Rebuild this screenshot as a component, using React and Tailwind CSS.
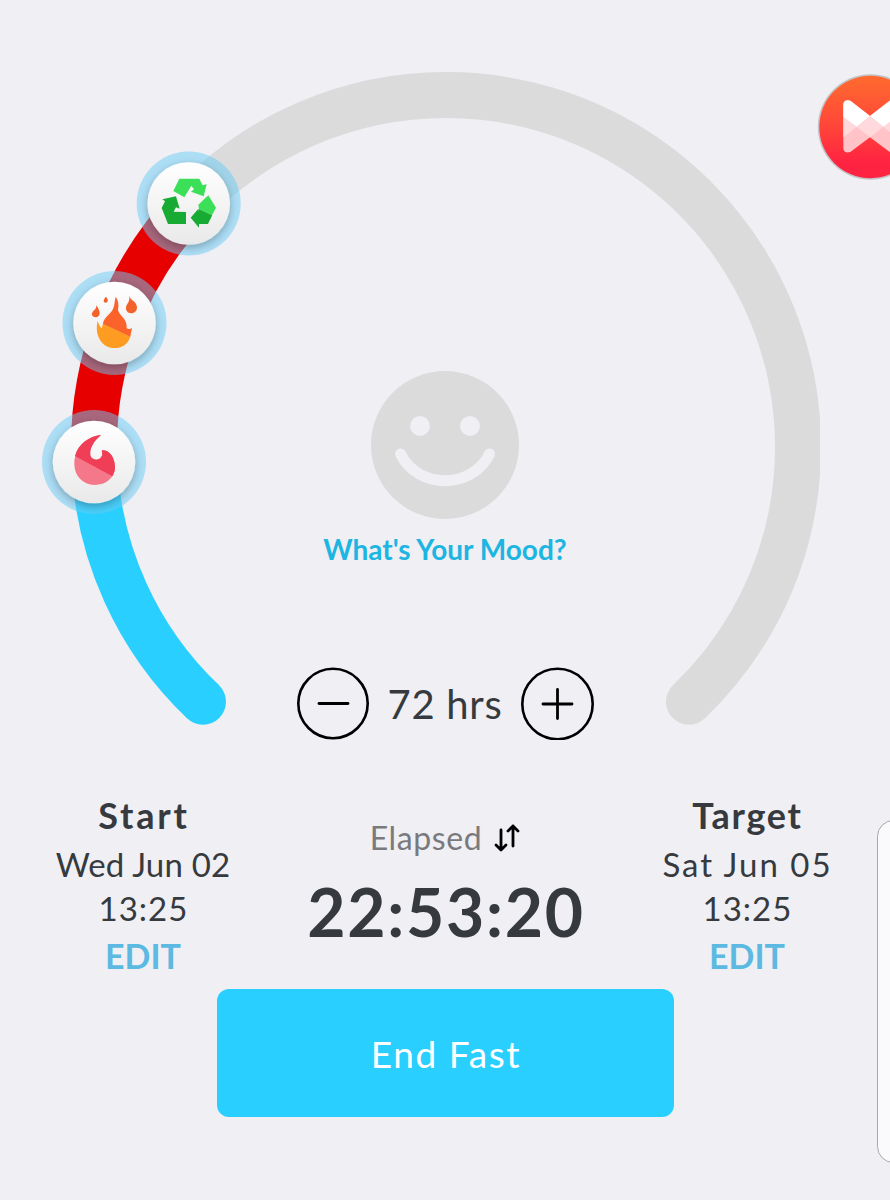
function RecycleIcon() {
  return (
    <g transform="translate(130 145) scale(0.3333)">
      <path d="M148 101 L208 101 L218 121 L230 118 L221 154 L183 140 L192 133 L184 122 L163 157 L130 138 Z" fill="#3bdf58" />
      <path d="M235 151 L258 188 L246 211 L207 192 L205 179 Z" fill="#3bdf58" />
      <path d="M205 191 L207 200 L246 211 L234 237 L207 237 L207 248 L182 218 Z" fill="#17ab34" />
      <path d="M207 192 L246 211 L240 224 L205 215 Z" fill="#17ab34" />
      <path d="M95 189 L105 169 L97 163 L138 154 L149 191 L138 187 L131 200 L168 201 L168 237 L114 237 Z" fill="#17ab34" />
    </g>
  );
}

function BonfireIcon() {
  return (
    <g transform="translate(55 265) scale(0.3333)">
      <path d="M153 95 C160 103 161 111 152 113 C143 111 145 103 153 95 Z" fill="#f4622b" />
      <path d="M124 121 C136 138 139 154 123 157 C106 155 109 142 118 135 C123 131 124 127 124 121 Z" fill="#f4622b" />
      <path d="M223 92 C225 106 246 109 246 127 C246 138 239 145 229 145 C211 144 210 127 217 117 C222 110 224 103 223 92 Z" fill="#f4622b" />
      <path d="M182 95 C190 105 192 120 189 135 C193 153 218 161 215 190 C222 194 228 191 231 189 C230 198 227 204 226 216 L144 178 C144 158 167 148 174 132 C180 119 178 108 182 95 Z" fill="#fb632a" />
      <path d="M128 167 C130 176 135 185 140 190 L144 176 L226 215 C218 239 201 249 178 249 C143 249 117 214 128 167 Z" fill="#fe9b21" />
    </g>
  );
}

function FlameIcon() {
  return (
    <g transform="translate(35 405) scale(0.3333)">
      <path d="M198 90 C176 109 163 130 166 151 C170 169 199 169 202 148 C203 142 198 138 202 136 C224 135 240 159 240 187 C239 219 213 240 179 240 C143 239 118 213 118 177 C118 130 154 94 198 90 Z" fill="#f5788a" />
      <path d="M198 90 C176 109 163 130 166 151 C170 169 199 169 202 148 C203 142 198 138 202 136 C224 135 240 159 240 187 C240 197 237 206 232 214 L120 153 C130 115 163 94 198 90 Z" fill="#ef3e56" />
    </g>
  );
}

function Stage({ cx, cy, children }) {
  return (
    <g>
      <circle cx={cx} cy={cy} r="52" fill="#69cdf8" fillOpacity="0.5" />
      <circle cx={cx} cy={cy} r="41.3" fill="url(#disc)" filter="url(#discShadow)" />
      {children}
    </g>
  );
}

function Dial() {
  return (
    <svg className="col-start-1 row-start-1" width="890" height="760" viewBox="0 0 890 760">
      <defs>
        <linearGradient id="disc" x1="0" y1="0" x2="0" y2="1">
          <stop offset="0" stopColor="#ffffff" />
          <stop offset="1" stopColor="#e9e9ea" />
        </linearGradient>
        <filter id="discShadow" x="-30%" y="-30%" width="160%" height="160%">
          <feDropShadow dx="0" dy="3" stdDeviation="4" floodColor="#000" floodOpacity="0.28" />
        </filter>
        <clipPath id="dialClip">
          <rect x="0" y="0" width="820" height="760" />
        </clipPath>
      </defs>
      <g fill="none" strokeWidth="46" clipPath="url(#dialClip)">
        <path d="M190.4 205 A352 352 0 0 1 446 95 A352 352 0 0 1 689 701.7" stroke="#dbdbdb" strokeLinecap="round" />
        <path d="M94.3 462 A352 352 0 0 1 190.4 205" stroke="#e60000" />
        <path d="M203 701.7 A352 352 0 0 1 94.3 462" stroke="#29d0ff" />
        <circle cx="203" cy="701.7" r="23" fill="#29d0ff" />
      </g>
      <Stage cx="188.7" cy="203.5">
        <RecycleIcon />
      </Stage>
      <Stage cx="114.5" cy="323">
        <BonfireIcon />
      </Stage>
      <Stage cx="94" cy="462">
        <FlameIcon />
      </Stage>
    </svg>
  );
}

function RoundButton({ label, plus }) {
  return (
    <button aria-label={label} className="size-[73px]">
      <svg width="73" height="73" viewBox="0 0 73 73" fill="none" stroke="#000" strokeLinecap="round">
        <circle cx={plus ? 36.5 : 37} cy={plus ? 37 : 36.5} r={plus ? 35.2 : 34.7} strokeWidth="2.6" />
        <path d={plus ? "M22 37 H51 M36.5 22.5 V51.5" : "M23 36.500 H52"} strokeWidth="2.8" />
      </svg>
    </button>
  );
}

function TimeColumn({ title, titleClass, date, dateClass, time }) {
  return (
    <div className="flex flex-col items-center whitespace-nowrap">
      <h2 className={`text-[36px] leading-12 font-bold ${titleClass}`}>{title}</h2>
      <p className={`mt-[3px] text-[33px] leading-11 ${dateClass}`}>{date}</p>
      <p className="pl-px text-[33px] leading-11 tracking-[1px]">{time}</p>
      <button className="mt-0.5 text-[34px] leading-12 font-bold text-[#5cb9e2]">EDIT</button>
    </div>
  );
}

function FloatingApp() {
  return (
    <svg className="absolute top-[70px] right-0" width="76" height="116" viewBox="814 70 76 116">
      <defs>
        <linearGradient id="appBg" x1="0" y1="0" x2="0" y2="1">
          <stop offset="0" stopColor="#ff6b2f" />
          <stop offset="0.45" stopColor="#ff4938" />
          <stop offset="0.85" stopColor="#ff2342" />
          <stop offset="1" stopColor="#ff2342" />
        </linearGradient>
      </defs>
      <circle cx="870.5" cy="127" r="52.7" fill="#c3c4c6" />
      <circle cx="870.5" cy="127" r="51.2" fill="url(#appBg)" />
      <g transform="translate(790 60) scale(0.3333)">
        <path d="M160 132 Q163 117 181 122 L240 168 L299 122 Q316 116 320 132 V266 Q316 282 299 276 L240 232 L181 276 Q163 281 160 266 Z" fill="#ffc3c8" />
        <path d="M160 132 Q163 117 181 122 L240 168 L200 201 L160 171 Z" fill="#fff" />
        <path d="M320 132 Q316 117 299 122 L240 168 L280 201 L320 171 Z" fill="#fff" />
        <path d="M240 168 L280 201 L240 232 L200 201 Z" fill="#ffd9dc" />
        <path d="M160 171 L200 201 L160 232 Z M320 171 L280 201 L320 232 Z" fill="#ffd9dc" />
      </g>
    </svg>
  );
}

export default function App() {
  return (
    <main className="relative h-[1200px] w-[890px] overflow-hidden bg-[#efeff4] font-['Lato','Noto_Sans',sans-serif] text-[#363a3e]">
      <section className="grid h-[760px]">
        <Dial />
        <div className="col-start-1 row-start-1 flex flex-col items-center pt-[371px]">
          <svg width="148" height="148" viewBox="0 0 148 148">
            <circle cx="74" cy="74" r="74" fill="#dbdbdb" />
            <circle cx="49" cy="55" r="10" fill="#efeff4" />
            <circle cx="99" cy="55" r="10" fill="#efeff4" />
            <path d="M29.5 83 C47 118.5 101 118.5 118.5 83" fill="none" stroke="#efeff4" strokeWidth="11" strokeLinecap="round" />
          </svg>
          <p className="mt-2.5 text-[28px] leading-10 font-bold text-[#1db5e1]">What's Your Mood?</p>
          <div className="mt-[97px] flex w-[298px] items-center justify-between">
            <RoundButton label="Decrease hours" />
            <span className="pt-0.5 text-[40px] leading-[72px] tracking-[0.7px]">72 hrs</span>
            <RoundButton label="Increase hours" plus />
          </div>
        </div>
      </section>

      <section className="grid h-[229px] grid-cols-[286px_1fr_286px] pt-[31px]">
        <TimeColumn title="Start" titleClass="pl-0.5 tracking-[2.8px]" date="Wed Jun 02" dateClass="tracking-[0.2px]" time="13:25" />
        <div className="flex flex-col items-center pt-[27px] whitespace-nowrap">
          <div className="flex items-center gap-3 text-[#7a7a7d]">
            <span className="text-[32px] leading-10 tracking-[0.6px]">Elapsed</span>
            <svg width="26" height="28" viewBox="0 0 26 28" fill="none" stroke="#000" strokeWidth="2.8" strokeLinecap="round" strokeLinejoin="round">
              <path d="M7 6 V26 M2 21 L7 26 L12 21" />
              <path d="M19 22 V2 M14 7 L19 2 L24 7" />
            </svg>
          </div>
          <p className="mt-[18px] pl-0.5 text-[66px] leading-[72px] font-bold tracking-[1.7px]">22:53:20</p>
        </div>
        <TimeColumn title="Target" titleClass="pl-px tracking-[1.7px]" date="Sat Jun 05" dateClass="pl-px tracking-[2px]" time="13:25" />
      </section>

      <button className="mx-auto block h-32 w-[457px] rounded-xl bg-[#29d0ff] pt-0.5 pl-0.5 text-[37px] tracking-[1.6px] text-white">
        End Fast
      </button>

      <FloatingApp />
      <div className="absolute top-[820px] -right-5 h-[343px] w-[33px] rounded-[18px] border-[1.5px] border-[#a8a8ab] bg-[#fafafc]" />
    </main>
  );
}
